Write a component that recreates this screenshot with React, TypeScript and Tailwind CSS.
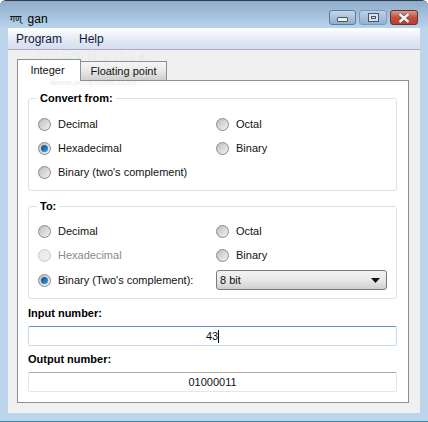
const uiFont = "font-['Liberation_Sans',Arial,sans-serif] text-[11px]";

function Radio({
  label,
  checked = false,
  disabled = false,
}: {
  label: string;
  checked?: boolean;
  disabled?: boolean;
}) {
  return (
    <div className="flex h-[24px] items-center gap-[7px]">
      <span
        className={`flex h-[13px] w-[13px] shrink-0 items-center justify-center rounded-full border ${
          disabled
            ? "border-[#c8c8c8] bg-[#ececec]"
            : "border-[#8a8a8a] bg-gradient-to-br from-[#bdbdbd] to-[#f4f4f4]"
        }`}
      >
        {checked && (
          <span className="h-[7px] w-[7px] rounded-full bg-gradient-to-br from-[#0f4f7f] to-[#2fa3dc]" />
        )}
      </span>
      <span className={disabled ? "text-[#8a8a8a]" : "text-[#111]"}>{label}</span>
    </div>
  );
}

function Group({
  title,
  className,
  children,
}: {
  title: string;
  className: string;
  children: React.ReactNode;
}) {
  return (
    <fieldset className={`rounded-[3px] border border-[#d9e2ec] pl-[9px] pr-[9px] ${className}`}>
      <legend className="-ml-px h-[14px] px-[3px] text-[11px] font-bold leading-[14px] text-black">
        {title}
      </legend>
      <div className="grid grid-cols-[178px_1fr]">{children}</div>
    </fieldset>
  );
}

function WindowButtons() {
  return (
    <div className="flex gap-[3px]">
      <div className="flex h-[15px] w-[27px] items-center justify-center rounded-[3px] border border-[#5f7a96] bg-gradient-to-b from-[#c6d8ea] to-[#8fadcb]">
        <span className="mt-[3px] h-[5px] w-[11px] rounded-[1px] border border-[#44566a] bg-[#f0f0f0]" />
      </div>
      <div className="flex h-[15px] w-[28px] items-center justify-center rounded-[3px] border border-[#7d9ab8] bg-gradient-to-b from-[#bcd1e6] to-[#93b1cf]">
        <span className="flex h-[9px] w-[11px] items-center justify-center border border-[#44566a] bg-[#d8e2ec]">
          <span className="h-[3px] w-[5px] border border-[#44566a]" />
        </span>
      </div>
      <div className="flex h-[15px] w-[28px] items-center justify-center rounded-[3px] border border-[#6b2f2f] bg-gradient-to-b from-[#dc9a8c] via-[#c0503c] to-[#b8402c]">
        <svg width="12" height="10" viewBox="0 0 12 10">
          <path d="M1.5 1 L10.5 9 M10.5 1 L1.5 9" stroke="#39404a" strokeWidth="3.4" />
          <path d="M1.5 1 L10.5 9 M10.5 1 L1.5 9" stroke="#f4f4f4" strokeWidth="2.4" />
        </svg>
      </div>
    </div>
  );
}

export default function App() {
  return (
    <div
      className={`relative flex h-[422px] w-[428px] flex-col overflow-hidden rounded-t-[6px] border-b border-t border-b-[#1f8fa0] border-t-[#2f3f4f] bg-[#bcd4ec] ${uiFont}`}
    >
      {/* title bar */}
      <div className="flex h-[27px] shrink-0 items-start justify-between bg-gradient-to-b from-[#8fadca] to-[#b8d3ec] pl-[10px] pr-[10px]">
        <div className="mt-[10px] flex items-center gap-[6px] text-[12px] leading-[16px] text-black">
          <span className="font-['Noto_Sans','DejaVu_Sans',sans-serif] text-[9px]">गण्</span>
          <span>gan</span>
        </div>
        <div className="mt-[9px]">
          <WindowButtons />
        </div>
      </div>

      {/* client area */}
      <div className="mx-[8px] flex flex-1 flex-col bg-[#f0f0f0]">
        <div className="flex h-[22px] shrink-0 items-center gap-[17px] border-b border-[#a8aebd] bg-gradient-to-b from-[#ffffff] via-[#e6ebf6] to-[#d6ddef] pl-[8px] pt-[1px] text-[12px] text-[#10203a]">
          <span>Program</span>
          <span>Help</span>
        </div>

        <div className="flex flex-1 flex-col pb-[10px] pl-[9px] pr-[11px] pt-[9px]">
          {/* tabs */}
          <div className="relative z-10 -mb-px flex h-[22px] items-end">
            <div className="flex h-[22px] w-[64px] items-center justify-center border border-b-0 border-[#8c8f94] bg-white pr-[3px] text-[#111]">
              Integer
            </div>
            <div className="-ml-px flex h-[20px] w-[87px] items-center justify-center border border-[#8c8f94] bg-gradient-to-b from-[#f6f6f6] via-[#e8e8e8] to-[#cfcfcf] text-[#111]">
              Floating point
            </div>
          </div>

          {/* tab pane */}
          <div className="flex flex-1 flex-col border border-[#8c8f94] bg-white pl-[10px] pr-[11px] pt-[10px]">
            <Group title="Convert from:" className="pb-[6px] pt-[7px]">
              <Radio label="Decimal" />
              <Radio label="Octal" />
              <Radio label="Hexadecimal" checked />
              <Radio label="Binary" />
              <Radio label="Binary (two's complement)" />
            </Group>

            <div className="mt-[8px]">
              <Group title="To:" className="pb-[6px] pt-[6px]">
                <Radio label="Decimal" />
                <Radio label="Octal" />
                <Radio label="Hexadecimal" disabled />
                <Radio label="Binary" />
                <div className="pt-[1px]">
                  <Radio label="Binary (Two's complement):" checked />
                </div>
                <div className="flex h-[25px] items-center pt-[1px]">
                  <div className="flex h-[20px] w-full items-center justify-between rounded-[3px] border border-[#7a7a7a] bg-gradient-to-b from-[#f2f2f2] via-[#e8e8e8] to-[#cfcfcf] pl-[3px] pr-[6px] text-[#111]">
                    <span>8 bit</span>
                    <svg width="9" height="5" viewBox="0 0 9 5">
                      <path d="M0 0 H9 L4.5 5 Z" fill="#111" />
                    </svg>
                  </div>
                </div>
              </Group>
            </div>

            <div className="mt-[7px] h-[14px] font-bold leading-[14px] text-black">Input number:</div>
            <div className="mt-[6px] flex h-[20px] items-center justify-center rounded-[2px] border border-[#c5dbec] border-t-[#5c9ac9] bg-white text-[#111]">
              <span>43</span>
              <span className="h-[13px] w-px bg-black" />
            </div>

            <div className="mt-[6px] h-[14px] font-bold leading-[14px] text-black">Output number:</div>
            <div className="mt-[6px] flex h-[20px] items-center justify-center rounded-[2px] border border-[#e3e6ea] border-t-[#a9a9a9] bg-white text-[#111]">
              01000011
            </div>
          </div>
        </div>
      </div>
      <div className="h-[8px] shrink-0" />

      {/* watermark over the window */}
      <div className="pointer-events-none absolute left-[33px] top-[47px] flex w-[120px] flex-col items-center text-white/80 [text-shadow:0_0_1px_#0003]">
        <span className="font-['Liberation_Serif',serif] text-[20px] leading-[22px] tracking-[1px]">SOFTPEDIA</span>
        <span className="mt-[6px] font-['Liberation_Sans',sans-serif] text-[10px] leading-[12px]">www.softpedia.com</span>
      </div>
    </div>
  );
}
